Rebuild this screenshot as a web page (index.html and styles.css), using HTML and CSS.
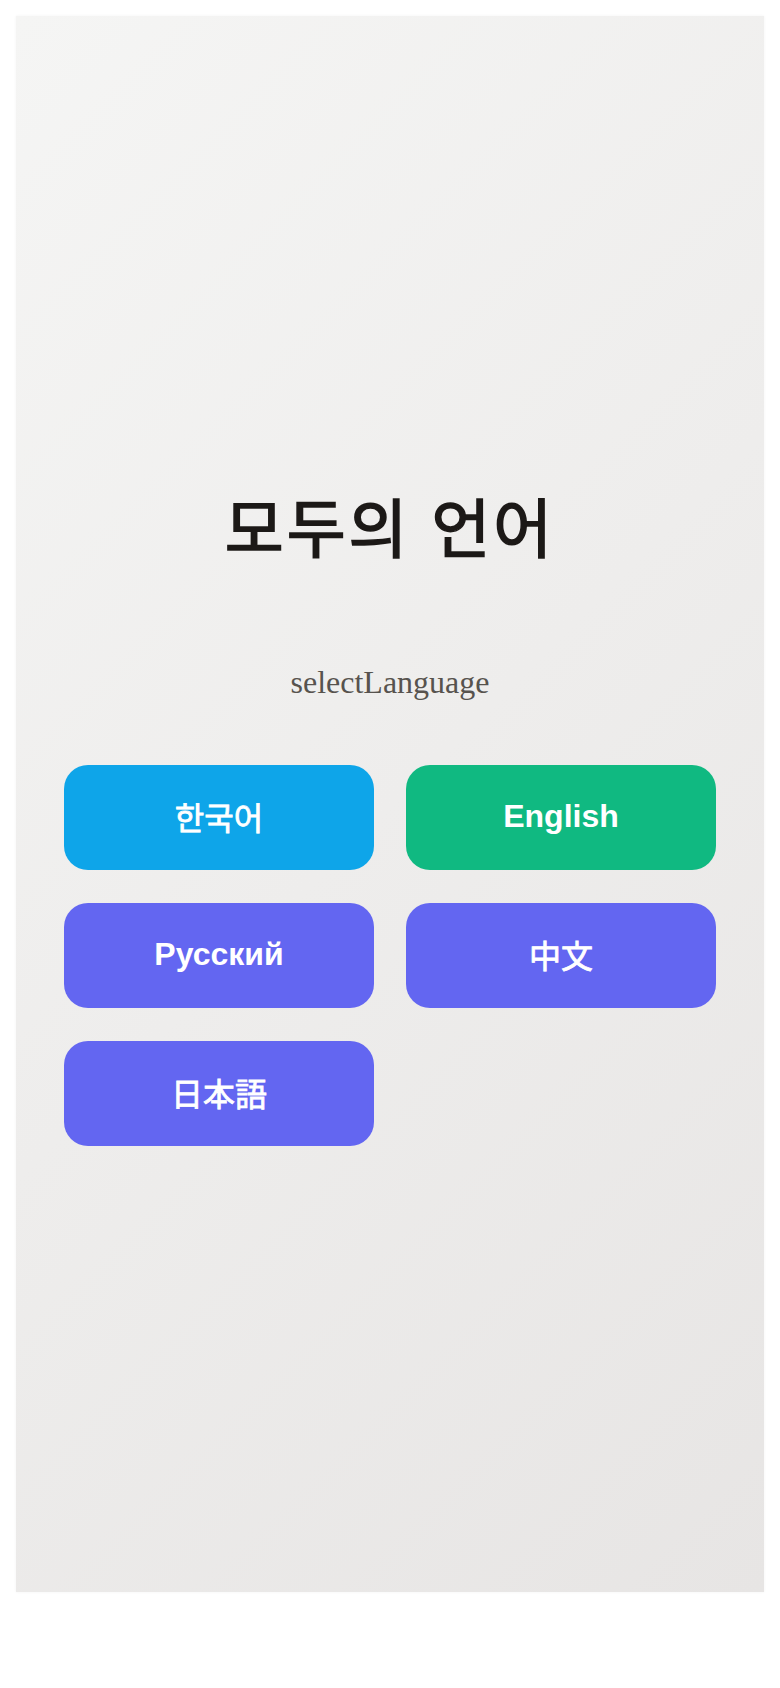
FILE: index.html
```html
<!DOCTYPE html>
<html lang="ko">
<head>
  <meta charset="UTF-8" />
  <title>모두의 언어</title>
  <link rel="stylesheet" href="styles.css">
</head>
<body>

  <div class="screen">
    <h1 class="app-title">모두의 언어</h1>
    <p class="subtitle">selectLanguage</p>

    <div class="lang-grid">
      <button class="lang-btn lang-ko lang-cjk">한국어</button>
      <button class="lang-btn lang-en">English</button>
      <button class="lang-btn">Русский</button>
      <button class="lang-btn lang-cjk">中文</button>
      <button class="lang-btn lang-cjk">日本語</button>
    </div>
  </div>

</body>
</html>
```

FILE: styles.css
```css
body {
  margin: 0;
  padding: 16px;
  background-color: #ffffff;
}
.screen {
  height: 1576px;
  box-sizing: border-box;
  padding: 24px 48px 0;
  display: flex;
  flex-direction: column;
  justify-content: center;
  text-align: center;
  background: linear-gradient(135deg, #f5f5f4, #e7e5e4);
  box-shadow: 0 0 3px rgba(0, 0, 0, 0.05);
}
.app-title {
  margin: 0 0 100px;
  font-family: "Noto Sans CJK KR", sans-serif;
  font-size: 64px;
  font-weight: 400;
  -webkit-text-stroke: 1.6px #1c1917;
  letter-spacing: 3px;
  line-height: 1.2;
  color: #1c1917;
}
.subtitle {
  margin: 0 0 63px;
  font-family: "Liberation Serif", serif;
  font-size: 32px;
  line-height: 1.2;
  color: #57534e;
}
.lang-grid {
  display: grid;
  grid-template-columns: 1fr 1fr;
  gap: 33px 32px;
}
.lang-btn {
  height: 105px;
  padding-bottom: 3px;
  border: none;
  border-radius: 24px;
  background-color: #6366f1;
  color: white;
  font-family: "Liberation Sans", "Noto Sans CJK KR", sans-serif;
  font-size: 32px;
  font-weight: 700;
  cursor: pointer;
}
.lang-cjk {
  font-weight: 400;
  -webkit-text-stroke: 0.8px white;
}
.lang-ko {
  background-color: #0ea5e9;
}
.lang-en {
  background-color: #10b981;
}
```
